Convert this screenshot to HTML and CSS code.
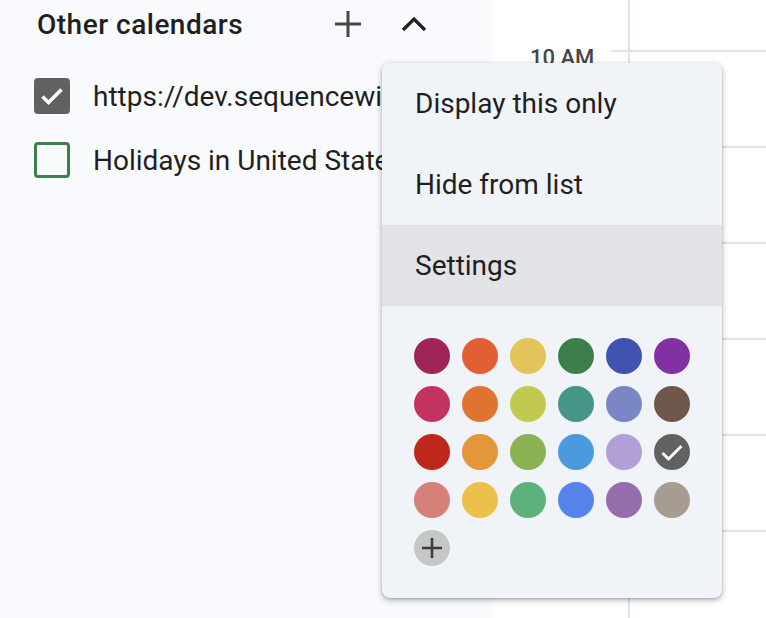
FILE: index.html
```html
<!DOCTYPE html>
<html lang="en">
<head>
    <meta charset="UTF-8">
    <meta name="viewport" content="width=device-width, initial-scale=1.0">
    <title>Other calendars</title>
    <link rel="stylesheet" href="styles.css">
</head>
<body>

    <div class="app">
        <!-- Barra lateral -->
        <div class="sidebar">
            <div class="section-header">
                <span class="section-title">Other calendars</span>
                <button class="icon-btn add-btn" aria-label="Add other calendars">
                    <svg width="28" height="28" viewBox="0 0 28 28"><path d="M14 1v26M1 14h26" stroke="#444746" stroke-width="3" fill="none"/></svg>
                </button>
                <button class="icon-btn collapse-btn" aria-label="Collapse">
                    <svg width="26" height="16" viewBox="0 0 26 16"><path d="M2 14L13 3l11 11" stroke="#1f1f1f" stroke-width="3.2" fill="none"/></svg>
                </button>
            </div>

            <div class="calendar-list">
                <div class="calendar-item">
                    <span class="checkbox checked">
                        <svg width="28" height="28" viewBox="0 0 28 28"><path d="M4.5 14.5l6 6 13-13" stroke="#fff" stroke-width="3.6" fill="none"/></svg>
                    </span>
                    <span class="calendar-name">https://dev.sequencewiz.com/calendar/feed</span>
                </div>
                <div class="calendar-item">
                    <span class="checkbox holidays"></span>
                    <span class="calendar-name">Holidays in United States</span>
                </div>
            </div>
        </div>

        <!-- Grade do dia -->
        <div class="main">
            <div class="gutter">
                <div class="hour"><span class="hour-label">10 AM</span></div>
                <div class="hour"></div>
                <div class="hour"></div>
                <div class="hour"></div>
                <div class="hour"></div>
                <div class="hour"></div>
            </div>
            <div class="day">
                <div class="slot"></div>
                <div class="slot"></div>
                <div class="slot"></div>
                <div class="slot"></div>
                <div class="slot"></div>
                <div class="slot"></div>
            </div>
        </div>
    </div>

    <!-- Menu de opções -->
    <div class="menu">
        <div class="menu-item">Display this only</div>
        <div class="menu-item">Hide from list</div>
        <div class="menu-item active">Settings</div>

        <div class="swatches">
            <span class="swatch" style="background-color: #9e2356"></span>
            <span class="swatch" style="background-color: #e25f33"></span>
            <span class="swatch" style="background-color: #e2c45a"></span>
            <span class="swatch" style="background-color: #3d7f4b"></span>
            <span class="swatch" style="background-color: #4152b0"></span>
            <span class="swatch" style="background-color: #8330a5"></span>

            <span class="swatch" style="background-color: #c2335f"></span>
            <span class="swatch" style="background-color: #e0732f"></span>
            <span class="swatch" style="background-color: #c2c951"></span>
            <span class="swatch" style="background-color: #459687"></span>
            <span class="swatch" style="background-color: #7b86c6"></span>
            <span class="swatch" style="background-color: #70574b"></span>

            <span class="swatch" style="background-color: #c0281d"></span>
            <span class="swatch" style="background-color: #e3973a"></span>
            <span class="swatch" style="background-color: #8ab253"></span>
            <span class="swatch" style="background-color: #4b9ae0"></span>
            <span class="swatch" style="background-color: #b29fd8"></span>
            <span class="swatch selected" style="background-color: #616161">
                <svg width="26" height="26" viewBox="0 0 26 26"><path d="M3.5 14l6 6 13-13" stroke="#fff" stroke-width="3" fill="none"/></svg>
            </span>

            <span class="swatch" style="background-color: #d58078"></span>
            <span class="swatch" style="background-color: #ecbf4b"></span>
            <span class="swatch" style="background-color: #5db27c"></span>
            <span class="swatch" style="background-color: #5784ec"></span>
            <span class="swatch" style="background-color: #956cac"></span>
            <span class="swatch" style="background-color: #a69c91"></span>

            <span class="swatch custom">
                <svg width="22" height="22" viewBox="0 0 22 22"><path d="M11 1v20M1 11h20" stroke="#3c3c3c" stroke-width="2.6" fill="none"/></svg>
            </span>
        </div>
    </div>

</body>
</html>
```

FILE: styles.css
```css
body {
    font-family: Roboto, "Noto Sans", sans-serif;
    margin: 0;
    color: #1f1f1f;
    background-color: #fff;
    overflow: hidden;
}

.app {
    display: flex;
    height: 618px;
    overflow: hidden;
}

.sidebar {
    width: 492px;
    flex-shrink: 0;
    background-color: #f8fafd;
    overflow: hidden;
}

.section-header {
    display: flex;
    align-items: center;
    height: 48px;
    padding-left: 37px;
}

.section-title {
    font-size: 28px;
    font-weight: 500;
    letter-spacing: 0.5px;
    width: 273px;
}

.icon-btn {
    border: none;
    background: none;
    padding: 0;
    width: 48px;
    height: 48px;
    display: flex;
    align-items: center;
    justify-content: center;
}

.add-btn {
    margin-left: 14px;
}

.collapse-btn {
    margin-left: 18px;
}

.calendar-list {
    padding-top: 16px;
}

.calendar-item {
    display: flex;
    align-items: center;
    height: 64px;
    padding-left: 34px;
    white-space: nowrap;
}

.checkbox {
    width: 36px;
    height: 36px;
    box-sizing: border-box;
    border-radius: 4px;
    flex-shrink: 0;
    display: flex;
    align-items: center;
    justify-content: center;
}

.checkbox.checked {
    background-color: #616161;
}

.checkbox.holidays {
    border: 3px solid #3d7f4b;
}

.calendar-name {
    font-size: 28px;
    margin-left: 23px;
}

.main {
    flex: 1;
    display: flex;
}

.gutter {
    width: 136px;
    padding-top: 50px;
}

.hour {
    height: 96px;
    display: flex;
    justify-content: space-between;
}

.hour::after {
    content: "";
    width: 17px;
    height: 2px;
    background-color: #dde3ea;
    margin-left: auto;
}

.hour-label {
    font-size: 22px;
    font-weight: 500;
    color: #444746;
    margin-top: -5px;
    margin-left: 38px;
    height: 30px;
}

.day {
    flex: 1;
    border-left: 2px solid #dde3ea;
    padding-top: 50px;
}

.slot {
    height: 94px;
    border-top: 2px solid #dde3ea;
}

.menu {
    position: absolute;
    left: 382px;
    top: 63px;
    width: 340px;
    height: 535px;
    background-color: #f0f4f9;
    border-radius: 8px;
    box-shadow: 0 2px 6px rgba(0, 0, 0, 0.3), 0 1px 2px rgba(0, 0, 0, 0.15);
    overflow: hidden;
}

.menu-item {
    height: 81px;
    display: flex;
    align-items: center;
    padding-left: 33px;
    font-size: 28px;
}

.menu-item.active {
    background-color: #e1e3e7;
}

.swatches {
    display: grid;
    grid-template-columns: repeat(6, 36px);
    gap: 12px;
    padding: 32px;
}

.swatch {
    width: 36px;
    height: 36px;
    border-radius: 50%;
    display: flex;
    align-items: center;
    justify-content: center;
}

.swatch.custom {
    background-color: #c4c7c5;
}
```
